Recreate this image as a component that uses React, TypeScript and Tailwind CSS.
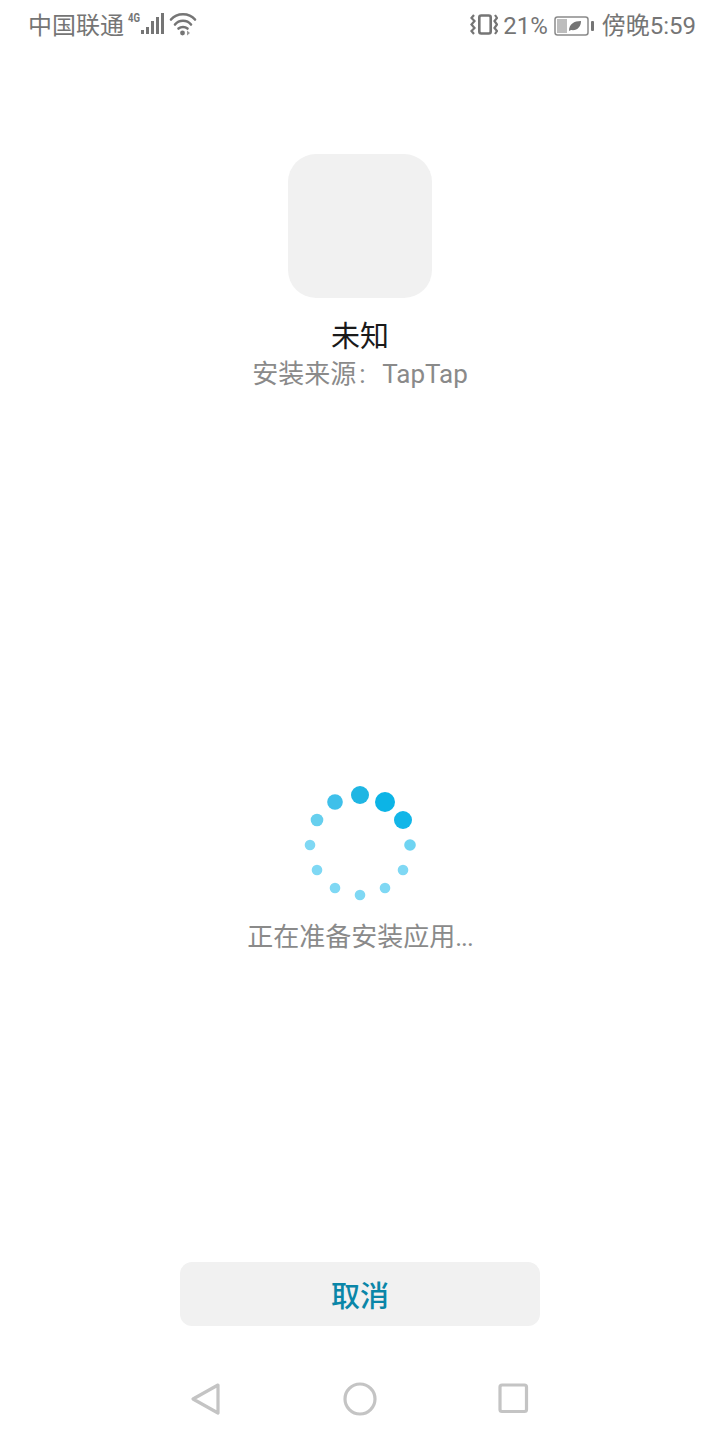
import React from 'react'

const font = "font-['Roboto','Noto_Sans_CJK_SC',sans-serif]"

const dots = [
  { cx: 360, cy: 795, r: 9, fill: '#1fb6e3' },
  { cx: 385, cy: 802, r: 10, fill: '#0cb4e6' },
  { cx: 403, cy: 820, r: 9, fill: '#12b6e8' },
  { cx: 410, cy: 845, r: 5.8, fill: '#6fd4f2' },
  { cx: 403, cy: 870, r: 5.3, fill: '#7fd8f4' },
  { cx: 385, cy: 888, r: 5.3, fill: '#7fd8f4' },
  { cx: 360, cy: 895, r: 5.3, fill: '#7fd8f4' },
  { cx: 335, cy: 888, r: 5.3, fill: '#7fd8f4' },
  { cx: 317, cy: 870, r: 5.3, fill: '#7fd8f4' },
  { cx: 310, cy: 845, r: 5.3, fill: '#7fd8f4' },
  { cx: 317, cy: 820, r: 6.3, fill: '#66cfee' },
  { cx: 335, cy: 802, r: 7.8, fill: '#3fc0ea' },
]

const Signal = () => (
  <svg width="70" height="32" viewBox="0 4 70 32" className="ml-[3px]">
    <text x="1" y="16" fontSize="12" fontWeight="700" fill="#757575" fontFamily="Roboto" textLength="12" lengthAdjust="spacingAndGlyphs">4G</text>
    <rect x="14" y="24" width="3" height="4" fill="#757575" />
    <rect x="19" y="21" width="3" height="7" fill="#757575" />
    <rect x="24" y="15" width="3" height="13" fill="#757575" />
    <rect x="29" y="11" width="3" height="17" fill="#757575" />
    <rect x="34" y="7" width="3" height="21" fill="#757575" />
    <g fill="none" stroke="#757575" strokeWidth="2.6" strokeLinecap="round">
      <path d="M44 13.5 C50 6.5 62 6.5 68 13.5" />
      <path d="M48 18.5 C52 13.5 60 13.5 64 18.5" />
      <path d="M51.5 22.5 C54 20.5 58 20.5 60.5 22.5" />
    </g>
    <circle cx="55.5" cy="27" r="2.4" fill="#757575" />
    <path d="M60 24.5 l3 2.5 -3 2.5z" fill="#9a9a9a" />
  </svg>
)

const Vibrate = () => (
  <svg width="28" height="26" viewBox="0 0 28 26">
    <rect x="9.3" y="2.5" width="11.4" height="18" rx="2" fill="none" stroke="#757575" strokeWidth="2.6" />
    <path d="M4 2 L1.5 5 L4.5 8 L1.5 11.5 L4.5 15 L1.5 18 L4 21" fill="none" stroke="#757575" strokeWidth="2.2" />
    <path d="M25 2 L27 5 L24.5 8 L27 11.5 L24.5 15 L27 18 L25 21" fill="none" stroke="#757575" strokeWidth="2.2" />
  </svg>
)

const Battery = () => (
  <svg width="41" height="22" viewBox="0 0 41 22">
    <rect x="1" y="2" width="33" height="18" rx="2.5" fill="none" stroke="#8a8a8a" strokeWidth="1.5" />
    <rect x="3" y="4" width="10" height="14" fill="#bdbdbd" />
    <path d="M15 16 C15 9 20 6 27 6 C27 12 23 16 17 15 Z" fill="#757575" />
    <rect x="37" y="6" width="3" height="10" rx="1" fill="#757575" />
  </svg>
)

const App = () => {
  return (
    <div className={`${font} flex h-[1440px] w-[720px] flex-col items-center bg-white`}>
      {/* status bar */}
      <div className="flex h-[50px] w-full items-center justify-between pl-[28px] pr-[24px] pt-[1px] text-[24px] text-[#757575]">
        <div className="flex items-center">
          <span>中国联通</span>
          <Signal />
        </div>
        <div className="flex items-center">
          <Vibrate />
          <span className="ml-[5px]">21%</span>
          <span className="ml-[6px] flex"><Battery /></span>
          <span className="ml-[7px]">傍晚5:59</span>
        </div>
      </div>

      {/* app info */}
      <div className="mt-[104px] h-[144px] w-[144px] rounded-[28px] bg-[#f1f1f1]" />
      <div className="mt-[20px] text-[29px] leading-[38px] text-[#1a1a1a]">未知</div>
      <div className="text-[26px] leading-[36px] text-[#8a8a8a]">
        安装来源<span className="inline-block w-[26px] pl-[3px]">:</span>TapTap
      </div>

      {/* spinner */}
      <svg width="120" height="120" viewBox="300 785 120 120" className="mt-[393px]">
        {dots.map((d) => (
          <circle key={`${d.cx}-${d.cy}`} cx={d.cx} cy={d.cy} r={d.r} fill={d.fill} />
        ))}
      </svg>
      <div className="mt-[12px] text-[26px] leading-[40px] text-[#8a8a8a]">
        正在准备安装应用<span className="tracking-[-1px]">...</span>
      </div>

      {/* cancel */}
      <button className="mt-[305px] flex h-[64px] w-[360px] items-center justify-center rounded-[12px] bg-[#f1f1f1] pt-[8px] text-[29px] font-medium text-[#0a86a8]">
        取消
      </button>

      {/* nav bar */}
      <div className="mt-[56px] flex w-[340px] items-center justify-between">
        <svg width="32" height="34" viewBox="0 0 32 34">
          <path d="M28 3 L3 17 L28 31 Z" fill="none" stroke="#c4c4c4" strokeWidth="3.2" strokeLinejoin="round" />
        </svg>
        <svg width="34" height="34" viewBox="0 0 34 34">
          <circle cx="17" cy="17" r="15" fill="none" stroke="#c4c4c4" strokeWidth="3.2" />
        </svg>
        <svg width="32" height="32" viewBox="0 0 32 32">
          <rect x="2" y="2" width="26.5" height="26.5" rx="2" fill="none" stroke="#c4c4c4" strokeWidth="3.2" />
        </svg>
      </div>
    </div>
  )
}

export default App
